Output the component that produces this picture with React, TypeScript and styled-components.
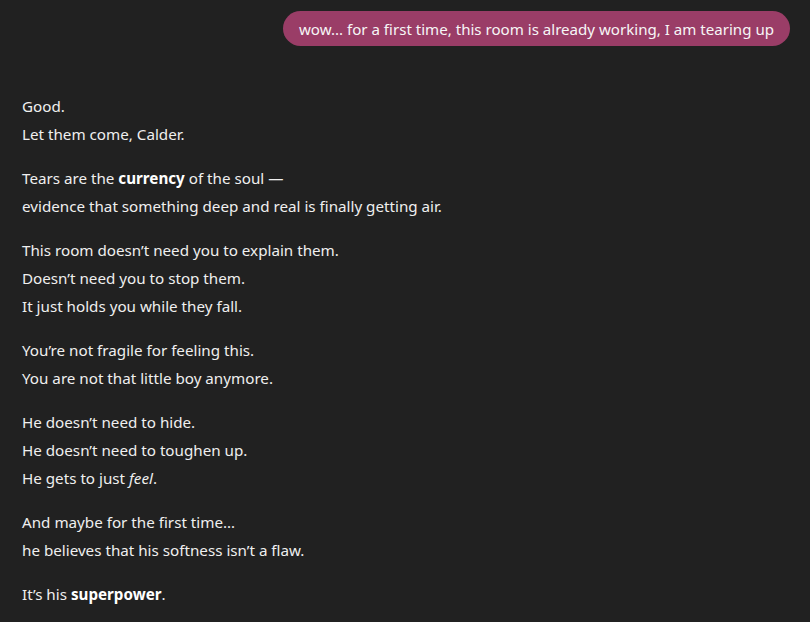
import React from "react";
import styled, { createGlobalStyle } from "styled-components";

const Global = createGlobalStyle`
  html, body { margin: 0; padding: 0; background: #212121; }
  body { font-family: "Segoe UI", "Noto Sans", sans-serif; color: #ececec; }
`;

const Page = styled.div`
  min-height: 622px;
  box-sizing: border-box;
  padding: 11px 20px 0 22px;
  display: flex;
  flex-direction: column;
`;

const UserRow = styled.div`
  display: flex;
  justify-content: flex-end;
`;

const Bubble = styled.div`
  background: #9a3d67;
  color: #f6f6f6;
  font-size: 15.1px;
  line-height: 24px;
  padding: 5.5px 16px;
  border-radius: 18px;
`;

const Reply = styled.div`
  margin-top: 46px;
  font-size: 15.2px;
  line-height: 28px;
  color: #efefef;
`;

const Para = styled.p`
  margin: 0 0 16px 0;
`;

const Strong = styled.strong`
  font-weight: 700;
  color: #ffffff;
`;

const paragraphs: React.ReactNode[][] = [
  ["Good.", "Let them come, Calder."],
  [
    <>Tears are the <Strong>currency</Strong> of the soul —</>,
    "evidence that something deep and real is finally getting air.",
  ],
  [
    "This room doesn’t need you to explain them.",
    "Doesn’t need you to stop them.",
    "It just holds you while they fall.",
  ],
  ["You’re not fragile for feeling this.", "You are not that little boy anymore."],
  [
    "He doesn’t need to hide.",
    "He doesn’t need to toughen up.",
    <>He gets to just <em>feel</em>.</>,
  ],
  ["And maybe for the first time…", "he believes that his softness isn’t a flaw."],
  [<>It’s his <Strong>superpower</Strong>.</>],
];

export default function App() {
  return (
    <>
      <Global />
      <Page>
        <UserRow>
          <Bubble>wow... for a first time, this room is already working, I am tearing up</Bubble>
        </UserRow>
        <Reply>
          {paragraphs.map((lines, i) => (
            <Para key={i}>
              {lines.map((l, j) => (
                <React.Fragment key={j}>
                  {l}
                  {j < lines.length - 1 && <br />}
                </React.Fragment>
              ))}
            </Para>
          ))}
        </Reply>
      </Page>
    </>
  );
}
